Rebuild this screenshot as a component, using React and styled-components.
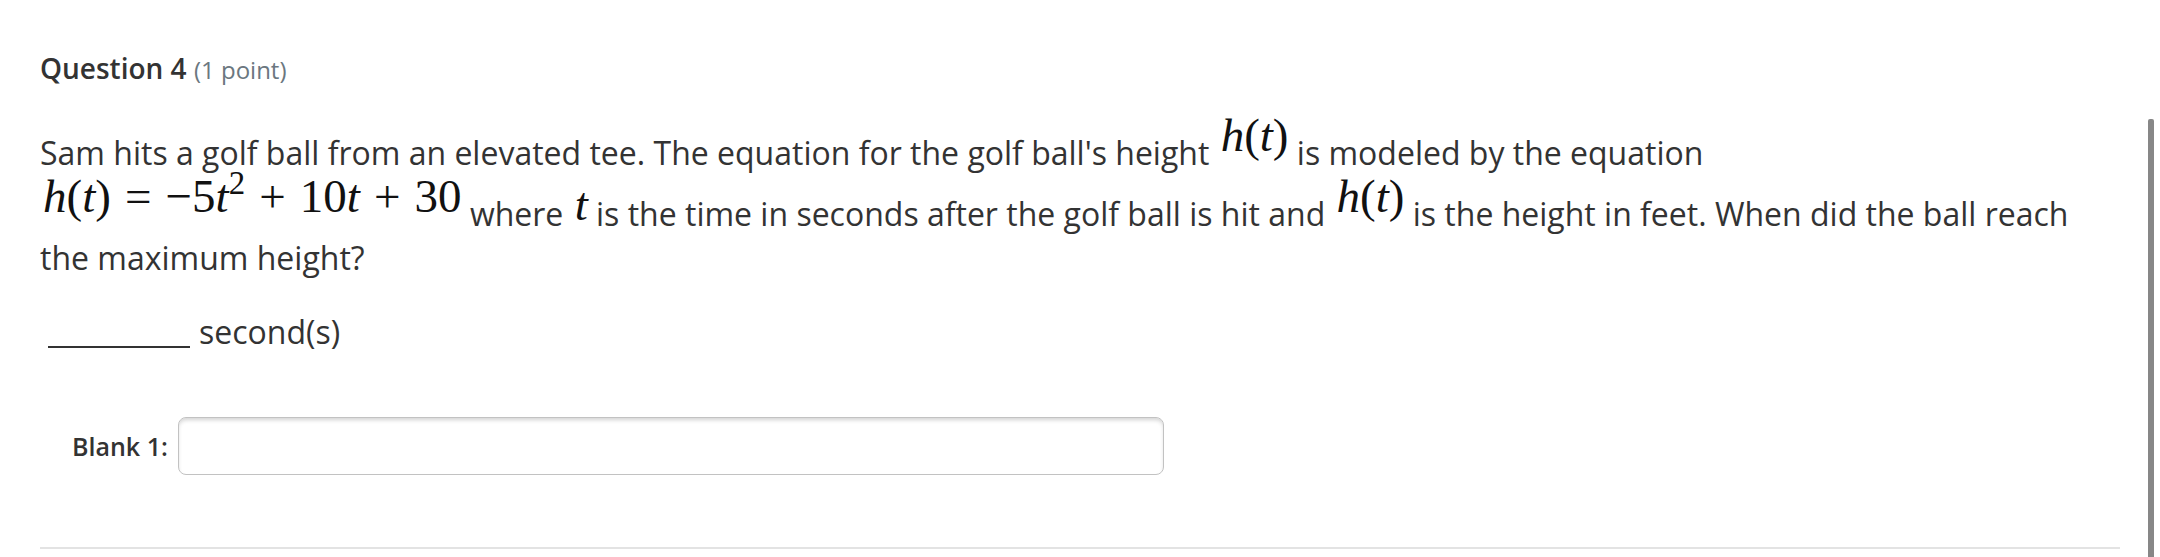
import styled, { createGlobalStyle } from 'styled-components';

const GlobalStyle = createGlobalStyle`
  html, body {
    margin: 0;
    padding: 0;
    background: #fff;
  }
  body {
    font-family: "Open Sans", "Liberation Sans", sans-serif;
    color: #333;
  }
`;

function MathExpr({ lift, children }) {
  return <MathSpan $lift={lift}>{children}</MathSpan>;
}

function App() {
  return (
    <Page>
      <GlobalStyle />
      <Main>
        <Header>
          <Title>Question 4</Title> <Points>(1 point)</Points>
        </Header>

        <QuestionText>
          Sam hits a golf ball from an elevated tee. The equation for the golf ball's height{' '}
          <MathExpr lift={14}>
            <Var>h</Var>(<Var>t</Var>)
          </MathExpr>{' '}
          is modeled by the equation{' '}
          <MathExpr lift={14}>
            <Var>h</Var>(<Var>t</Var>)<Op>=</Op>−5<Var>t</Var>
            <Sup>2</Sup>
            <Op>+</Op>10<Var>t</Var>
            <Op>+</Op>30
          </MathExpr>{' '}
          where{' '}
          <MathExpr lift={6}>
            <Var>t</Var>
          </MathExpr>{' '}
          is the time in seconds after the golf ball is hit and{' '}
          <MathExpr lift={14}>
            <Var>h</Var>(<Var>t</Var>)
          </MathExpr>{' '}
          is the height in feet. When did the ball reach the maximum height?
        </QuestionText>

        <AnswerLine>
          <BlankLine />
          <Unit>second(s)</Unit>
        </AnswerLine>

        <BlankRow>
          <BlankLabel htmlFor="blank-1">Blank 1:</BlankLabel>
          <BlankInput id="blank-1" type="text" />
        </BlankRow>

        <Divider />
      </Main>
      <Gutter>
        <ScrollThumb />
      </Gutter>
    </Page>
  );
}

export default App;

const Page = styled.div`
  display: flex;
  width: 2160px;
  height: 557px;
  overflow: hidden;
`;

const Main = styled.div`
  width: 2120px;
  flex-shrink: 0;
  padding: 50px 0 0 40px;
  box-sizing: border-box;
  display: flex;
  flex-direction: column;
`;

const Gutter = styled.div`
  flex: 1;
  display: flex;
  justify-content: flex-end;
  padding-right: 6px;
  padding-top: 119px;
`;

const ScrollThumb = styled.div`
  width: 6px;
  height: 100%;
  background: #878787;
  border-radius: 2px 2px 0 0;
`;

const Header = styled.div`
  font-size: 28px;
  line-height: 36px;
  height: 36px;
`;

const Title = styled.span`
  font-size: 28px;
  font-weight: 600;
  color: #333;
`;

const Points = styled.span`
  font-size: 24px;
  font-weight: 400;
  color: #6b7780;
`;

const QuestionText = styled.p`
  margin: 28px 0 0;
  max-width: 2050px;
  font-size: 32px;
  line-height: 44px;
  color: #333;
`;

const MathSpan = styled.span`
  display: inline-block;
  white-space: nowrap;
  margin-left: 3px;
  font-family: "Liberation Serif", "DejaVu Serif", serif;
  font-size: 47px;
  line-height: 42px;
  vertical-align: ${(p) => p.$lift || 0}px;
  color: #111;
`;

const Var = styled.i`
  font-style: italic;
`;

const Op = styled.span`
  padding: 0 0.3em;
`;

const Sup = styled.sup`
  font-size: 0.7em;
  vertical-align: 0.55em;
  line-height: 0;
`;

const AnswerLine = styled.div`
  display: flex;
  align-items: flex-end;
  margin-top: 30px;
  font-size: 32px;
  line-height: 44px;
`;

const BlankLine = styled.span`
  display: inline-block;
  width: 142px;
  height: 0;
  margin-left: 8px;
  margin-bottom: 6px;
  border-bottom: 2px solid #333;
`;

const Unit = styled.span`
  margin-left: 9px;
  color: #333;
`;

const BlankRow = styled.div`
  display: flex;
  align-items: center;
  margin-top: 63px;
  padding-left: 32px;
`;

const BlankLabel = styled.label`
  font-size: 25px;
  font-weight: 600;
  color: #333;
  margin-right: 10px;
`;

const BlankInput = styled.input`
  width: 986px;
  height: 58px;
  box-sizing: border-box;
  border: 1px solid #c2c2c2;
  border-radius: 8px;
  box-shadow: inset 0 3px 4px -1px rgba(0, 0, 0, 0.18);
  outline: none;
  font-size: 24px;
  padding: 0 12px;
`;

const Divider = styled.div`
  margin-top: 72px;
  height: 2px;
  background: #e3e3e3;
`;
